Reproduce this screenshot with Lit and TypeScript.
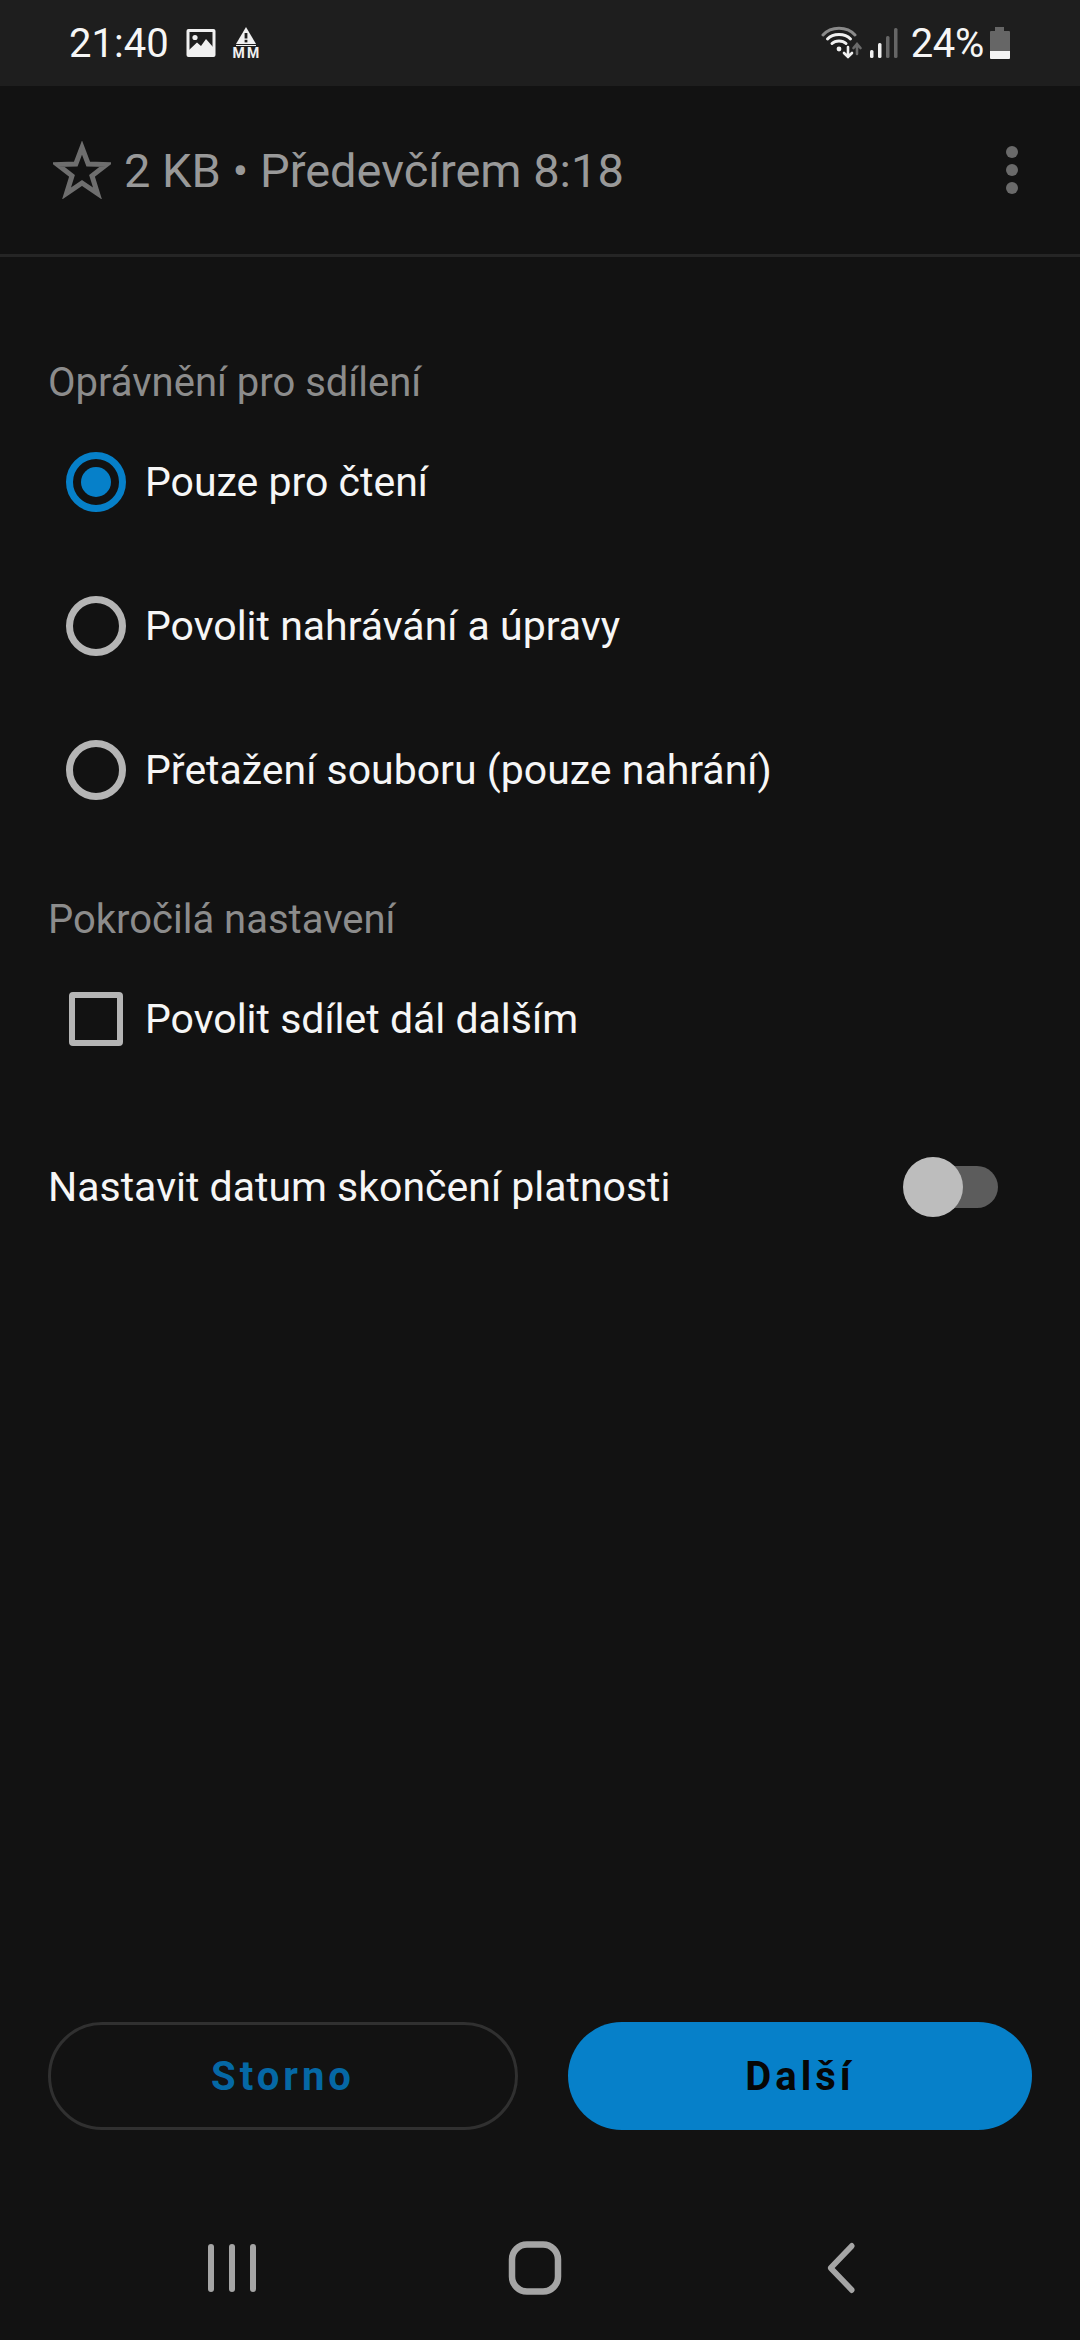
import { LitElement, html, css, svg } from "lit";
import { customElement } from "lit/decorators.js";

@customElement("app-root")
export class AppRoot extends LitElement {
  static styles = css`
    :host { display: block; width: 1080px; height: 2340px; background: #121212; font-family: Roboto, "Noto Sans", sans-serif; color: #f6f6f6; overflow: hidden; }
    .page { display: flex; flex-direction: column; height: 2340px; }
    svg { display: block; flex: none; }
    .status { height: 86px; flex: none; background: #1e1e1e; display: flex; align-items: center; padding: 0 70px 0 69px; box-sizing: border-box; font-size: 40px; }
    .status .time { margin-right: 17px; }
    .status .warn { margin-left: 16px; }
    .spacer { flex: 1; }
    .status .pct { margin: 0 6px 0 13px; letter-spacing: -0.3px; }
    .status .sig { margin-left: 7px; }
    .header { height: 171px; flex: none; box-sizing: border-box; border-bottom: 3px solid #252525; display: flex; align-items: center; padding: 0 62px 0 53px; color: #999; font-size: 47px; }
    .header .meta { margin-left: 13px; flex: 1; }
    .main { padding-top: 99px; display: flex; flex-direction: column; }
    .label { height: 54px; line-height: 54px; padding-left: 48px; font-size: 40px; color: #8c8c8c; }
    .label.second { margin-top: 51px; }
    .row { height: 144px; display: flex; align-items: center; font-size: 41px; padding-left: 66px; }
    .row .text { margin-left: 19px; }
    .radio { width: 60px; height: 60px; box-sizing: border-box; border-radius: 50%; border: 7px solid #b5b5b5; display: flex; align-items: center; justify-content: center; flex: none; }
    .radio.on { border-color: #0680c9; }
    .radio.on::after { content: ""; width: 30px; height: 30px; border-radius: 50%; background: #0680c9; }
    .box-wrap { width: 60px; display: flex; justify-content: center; flex: none; }
    .box { width: 54px; height: 54px; box-sizing: border-box; border: 6px solid #b5b5b5; border-radius: 4px; }
    .switch-row { margin-top: 36px; height: 120px; display: flex; align-items: center; justify-content: space-between; padding: 0 82px 0 48px; font-size: 41px; }
    .switch { width: 95px; height: 60px; position: relative; flex: none; }
    .track { position: absolute; left: 7px; right: 0; top: 9px; height: 42px; border-radius: 21px; background: #5c5c5c; }
    .thumb { position: absolute; left: 0; top: 0; width: 60px; height: 60px; border-radius: 50%; background: #bdbdbd; }
    .footer { margin-top: auto; flex: none; }
    .buttons { display: flex; gap: 50px; padding: 0 48px; }
    .btn { flex: 1; height: 108px; box-sizing: border-box; border-radius: 54px; display: flex; align-items: center; justify-content: center; font-size: 40px; font-weight: 700; letter-spacing: 4px; }
    .btn.ghost { border: 3px solid #303030; color: #0568a5; }
    .btn.solid { background: #0680c9; color: #060606; }
    .nav { height: 210px; box-sizing: border-box; padding: 111px 10px 0 0; display: flex; justify-content: center; gap: 243px; }
  `;

  render() {
    return html`<div class="page">
      <div class="status">
        <span class="time">21:40</span>
        ${this.imageIcon()}
        ${this.warnIcon()}
        <div class="spacer"></div>
        ${this.wifiIcon()}
        ${this.signalIcon()}
        <span class="pct">24%</span>
        ${this.batteryIcon()}
      </div>
      <div class="header">
        <svg width="58" height="58" viewBox="0 0 58 58"><path d="M29 6.5 L35.2 23 L53.5 23.6 L39 34.8 L44.5 52.5 L29 42 L13.5 52.5 L19 34.8 L4.5 23.6 L22.8 23 Z" fill="none" stroke="#6e6e6e" stroke-width="5"/></svg>
        <span class="meta">2 KB • Předevčírem 8:18</span>
        <svg width="12" height="48" viewBox="0 0 12 48"><circle cx="6" cy="6" r="6" fill="#6a6a6a"/><circle cx="6" cy="24" r="6" fill="#6a6a6a"/><circle cx="6" cy="42" r="6" fill="#6a6a6a"/></svg>
      </div>
      <div class="main">
        <div class="label">Oprávnění pro sdílení</div>
        <div class="row"><span class="radio on"></span><span class="text">Pouze pro čtení</span></div>
        <div class="row"><span class="radio"></span><span class="text">Povolit nahrávání a úpravy</span></div>
        <div class="row"><span class="radio"></span><span class="text">Přetažení souboru (pouze nahrání)</span></div>
        <div class="label second">Pokročilá nastavení</div>
        <div class="row"><span class="box-wrap"><span class="box"></span></span><span class="text">Povolit sdílet dál dalším</span></div>
        <div class="switch-row"><span>Nastavit datum skončení platnosti</span><span class="switch"><span class="track"></span><span class="thumb"></span></span></div>
      </div>
      <div class="footer">
        <div class="buttons"><div class="btn ghost">Storno</div><div class="btn solid">Další</div></div>
        <div class="nav">
          <svg width="60" height="54" viewBox="0 0 60 54"><g fill="none" stroke="#a5a5a5" stroke-width="6" stroke-linecap="round"><path d="M9 6V48"/><path d="M30 6V48"/><path d="M51 6V48"/></g></svg>
          <svg width="60" height="54" viewBox="0 0 60 54"><rect x="7" y="3.5" width="46" height="47" rx="15" fill="none" stroke="#a5a5a5" stroke-width="6.5"/></svg>
          <svg width="60" height="54" viewBox="0 0 60 54"><path d="M44 5 L20 27 M20 27" fill="none"/><path d="M42 5 L18.5 27 L42 49" transform="translate(6 0) scale(0.9 1)" fill="none" stroke="#a5a5a5" stroke-width="6" stroke-linecap="round" stroke-linejoin="round"/></svg>
        </div>
      </div>
    </div>`;
  }

  imageIcon() {
    return html`<svg width="30" height="30" viewBox="0 0 30 30"><rect x="0.5" y="1" width="29" height="28" rx="2" fill="#f0f0f0"/><rect x="3.5" y="4" width="23" height="19" fill="#1e1e1e"/><circle cx="9" cy="9.5" r="2.6" fill="#f0f0f0"/><path d="M3 22 L11 14.5 L15 18 L20 11 L27 19 V26 H3 Z" fill="#f0f0f0"/></svg>`;
  }

  warnIcon() {
    return html`<svg class="warn" width="28" height="32" viewBox="0 0 28 32"><path d="M14 0 L24 17 H4 Z" fill="#f0f0f0"/><rect x="12.6" y="6" width="2.8" height="5.5" fill="#1e1e1e"/><rect x="12.6" y="12.8" width="2.8" height="2.6" fill="#1e1e1e"/><rect x="4" y="18" width="20" height="1" fill="#f0f0f0"/><text x="0.5" y="31" font-family="Roboto" font-size="14" font-weight="700" fill="#f0f0f0">M</text><text x="15" y="31" font-family="Roboto" font-size="14" font-weight="700" fill="#f0f0f0">M</text></svg>`;
  }

  wifiIcon() {
    return svg`<svg width="42" height="34" viewBox="0 0 42 34"><g fill="none" stroke-width="3" stroke-linecap="round"><path d="M2 9 C10 0 26 0 34 9" stroke="#8a8a8a"/><path d="M6.5 13 C12 7 24 7 29.5 13" stroke="#f0f0f0"/><path d="M11 17.5 C14.5 14 21.5 14 25 17.5" stroke="#f0f0f0"/><path d="M27 21 V31 M23 27 L27 31 L31 27" stroke="#f0f0f0" stroke-width="2.6"/><path d="M36 28 V19 M32.5 22 L36 18 L39.5 22" stroke="#6a6a6a" stroke-width="2.6"/></g><circle cx="18" cy="23" r="2.4" fill="#f0f0f0"/></svg>`;
  }

  signalIcon() {
    return svg`<svg class="sig" width="28" height="30" viewBox="0 0 28 30"><rect x="0" y="22" width="3.5" height="8" rx="1.5" fill="#f0f0f0"/><rect x="8" y="15" width="3.5" height="15" rx="1.5" fill="#f0f0f0"/><rect x="16" y="8" width="3.5" height="22" rx="1.5" fill="#666"/><rect x="24" y="0" width="3.5" height="30" rx="1.5" fill="#666"/></svg>`;
  }

  batteryIcon() {
    return svg`<svg width="20" height="32" viewBox="0 0 20 32"><path d="M5 0 H14 V4 H19 a1 1 0 0 1 1 1 V24 H0 V5 a1 1 0 0 1 1 -1 H5 Z" fill="#666"/><path d="M0 24 H20 V31 a1 1 0 0 1 -1 1 H1 a1 1 0 0 1 -1 -1 Z" fill="#f4f4f4"/></svg>`;
  }
}
